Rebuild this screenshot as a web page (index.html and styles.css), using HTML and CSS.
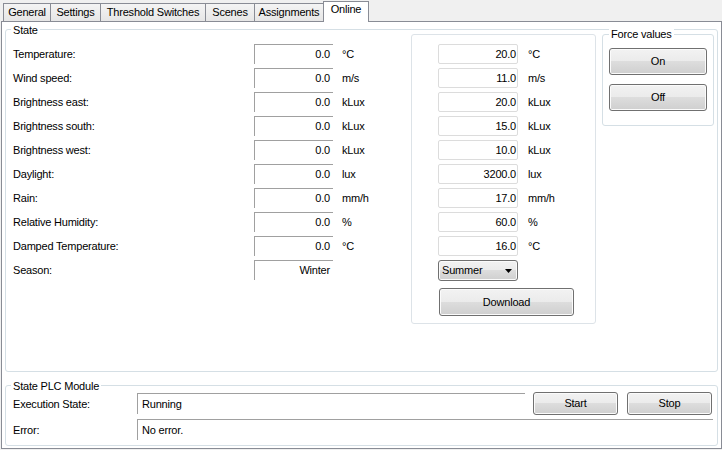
FILE: index.html
```html
<!DOCTYPE html>
<html>
<head>
<meta charset="utf-8">
<title>Online</title>
<link rel="stylesheet" href="styles.css">
</head>
<body>
<div class="tabs">
  <div class="tab t-general">General</div>
  <div class="tab t-settings">Settings</div>
  <div class="tab t-threshold">Threshold Switches</div>
  <div class="tab t-scenes">Scenes</div>
  <div class="tab t-assign">Assignments</div>
  <div class="tab t-online active">Online</div>
</div>
<div class="panel">
  <section class="group state">
    <span class="legend">State</span>
    <div class="state-body">
      <div class="readings">
        <span class="lbl">Temperature:</span><span class="field">0.0</span><span class="unit">°C</span>
        <span class="lbl">Wind speed:</span><span class="field">0.0</span><span class="unit">m/s</span>
        <span class="lbl">Brightness east:</span><span class="field">0.0</span><span class="unit">kLux</span>
        <span class="lbl">Brightness south:</span><span class="field">0.0</span><span class="unit">kLux</span>
        <span class="lbl">Brightness west:</span><span class="field">0.0</span><span class="unit">kLux</span>
        <span class="lbl">Daylight:</span><span class="field">0.0</span><span class="unit">lux</span>
        <span class="lbl">Rain:</span><span class="field">0.0</span><span class="unit">mm/h</span>
        <span class="lbl">Relative Humidity:</span><span class="field">0.0</span><span class="unit">%</span>
        <span class="lbl">Damped Temperature:</span><span class="field">0.0</span><span class="unit">°C</span>
        <span class="lbl">Season:</span><span class="field">Winter</span><span class="unit"></span>
      </div>
      <div class="setpoints">
        <div class="sp-grid">
          <span class="input">20.0</span><span class="unit2">°C</span>
          <span class="input">11.0</span><span class="unit2">m/s</span>
          <span class="input">20.0</span><span class="unit2">kLux</span>
          <span class="input">15.0</span><span class="unit2">kLux</span>
          <span class="input">10.0</span><span class="unit2">kLux</span>
          <span class="input">3200.0</span><span class="unit2">lux</span>
          <span class="input">17.0</span><span class="unit2">mm/h</span>
          <span class="input">60.0</span><span class="unit2">%</span>
          <span class="input">16.0</span><span class="unit2">°C</span>
          <div class="select"><span>Summer</span><svg width="7" height="4" viewBox="0 0 7 4"><path d="M0 0H7L3.5 4Z" fill="#000"/></svg></div><span></span>
        </div>
        <button class="btn download">Download</button>
      </div>
      <section class="group force">
        <span class="legend">Force values</span>
        <button class="btn force-btn">On</button>
        <button class="btn force-btn off">Off</button>
      </section>
    </div>
  </section>
  <section class="group plc">
    <span class="legend">State PLC Module</span>
    <div class="plc-row">
      <span class="plc-lbl">Execution State:</span>
      <span class="field plc-field exec">Running</span>
      <button class="btn plc-btn start">Start</button>
      <button class="btn plc-btn stop">Stop</button>
    </div>
    <div class="plc-row second">
      <span class="plc-lbl">Error:</span>
      <span class="field plc-field err">No error.</span>
    </div>
  </section>
</div>
</body>
</html>
```

FILE: styles.css
```css
html, body {
  margin: 0;
  padding: 0;
}
body {
  width: 722px;
  height: 450px;
  overflow: hidden;
  background: #f0f0f0;
  font-family: "Liberation Sans", Arial, sans-serif;
  font-size: 11px;
  line-height: 13px;
  letter-spacing: -0.2px;
  color: #000;
}
* { box-sizing: border-box; }

/* Tabs */
.tabs {
  display: flex;
  align-items: flex-end;
  height: 21px;
  padding-left: 3px;
}
.tab {
  height: 18px;
  border: 1px solid #898c95;
  border-bottom: 0;
  margin-left: -1px;
  background: linear-gradient(#f4f4f4, #e6e6e6);
  text-align: center;
  line-height: 17px;
  white-space: nowrap;
}
.t-general { width: 48px; margin-left: 0; }
.t-settings { width: 51px; }
.t-threshold { width: 106px; }
.t-scenes { width: 50px; }
.t-assign { width: 70px; }
.t-online { width: 46px; }
.tab.active {
  position: relative;
  z-index: 1;
  height: 21px;
  margin-bottom: -1px;
  background: #fff;
  line-height: 14px;
}

/* Panel */
.panel {
  margin-left: 1px;
  width: 721px;
  height: 428px;
  border: 1px solid #898c95;
  background: #fff;
  overflow: hidden;
}
.group {
  position: relative;
  border: 1px solid #d5dfe5;
  border-radius: 3px;
}
.legend {
  position: absolute;
  top: -6px;
  left: 5px;
  padding: 0 2px;
  background: #fff;
  line-height: 12px;
  white-space: nowrap;
}

.state {
  margin: 7px 3px 0;
  height: 343px;
}
.state-body {
  display: flex;
  align-items: flex-start;
}
.readings {
  margin-top: 12px;
  padding-left: 7px;
  width: 405px;
  display: grid;
  grid-template-columns: 241px 79px 78px;
  grid-auto-rows: 24px;
  align-items: center;
}
.lbl { padding-top: 1px; white-space: nowrap; }
.field {
  height: 20px;
  border-top: 1px solid #a0a0a0;
  border-left: 1px solid #a0a0a0;
  text-align: right;
  padding-right: 3px;
  line-height: 19px;
}
.unit { padding-left: 9px; padding-top: 1px; }

.setpoints {
  margin-top: 4px;
  width: 185px;
  height: 290px;
  border: 1px solid #dde3e8;
  border-radius: 3px;
  padding: 7px 0 0 26px;
}
.sp-grid {
  display: grid;
  grid-template-columns: 80px 1fr;
  grid-auto-rows: 24px;
  align-items: center;
}
.input {
  height: 20px;
  border: 1px solid #dcdcdc;
  border-radius: 2px;
  text-align: right;
  padding-right: 1px;
  line-height: 18px;
}
.unit2 { padding-left: 10px; padding-top: 1px; }

.btn {
  display: block;
  margin: 0;
  padding: 0;
  font: inherit;
  letter-spacing: inherit;
  color: #000;
  border: 1px solid #707070;
  border-radius: 3px;
  background: linear-gradient(#f2f2f2 0%, #ebebeb 50%, #dddddd 50%, #cfcfcf 100%);
  box-shadow: inset 0 0 0 1px #fbfbfb;
  text-align: center;
}
.select {
  height: 21px;
  width: 80px;
  border: 1px solid #707070;
  border-radius: 3px;
  background: linear-gradient(#f2f2f2 0%, #ebebeb 50%, #dddddd 50%, #cfcfcf 100%);
  box-shadow: inset 0 0 0 1px #fbfbfb;
  display: flex;
  align-items: center;
  justify-content: space-between;
  padding: 1px 5px 0 3px;
}
.select svg { display: block; margin-top: 1px; }
.download {
  margin-top: 6px;
  margin-left: 1px;
  width: 135px;
  height: 28px;
}

.force {
  margin-top: 4px;
  margin-left: 6px;
  width: 112px;
  height: 92px;
  padding: 13px 0 0 6px;
}
.force .legend { top: -7px; left: 6px; }
.force-btn {
  width: 98px;
  height: 27px;
}
.force-btn.off { margin-top: 9px; }

/* PLC */
.plc {
  margin: 13px 3px 0;
  height: 61px;
  padding: 6px 4px 0 7px;
}
.plc-row {
  display: flex;
  align-items: center;
  height: 23px;
}
.plc-row.second {
  margin-top: 4px;
  height: 21px;
}
.plc-lbl {
  width: 124px;
  flex: none;
  white-space: nowrap;
  padding-top: 1px;
}
.plc-field {
  height: 21px;
  text-align: left;
  padding: 0 0 0 4px;
  line-height: 20px;
}
.plc-field.exec { width: 388px; flex: none; }
.plc-field.err { flex: 1; }
.plc-btn {
  width: 85px;
  height: 23px;
  flex: none;
}
.start { margin-left: 8px; }
.stop { margin-left: 9px; }
```
